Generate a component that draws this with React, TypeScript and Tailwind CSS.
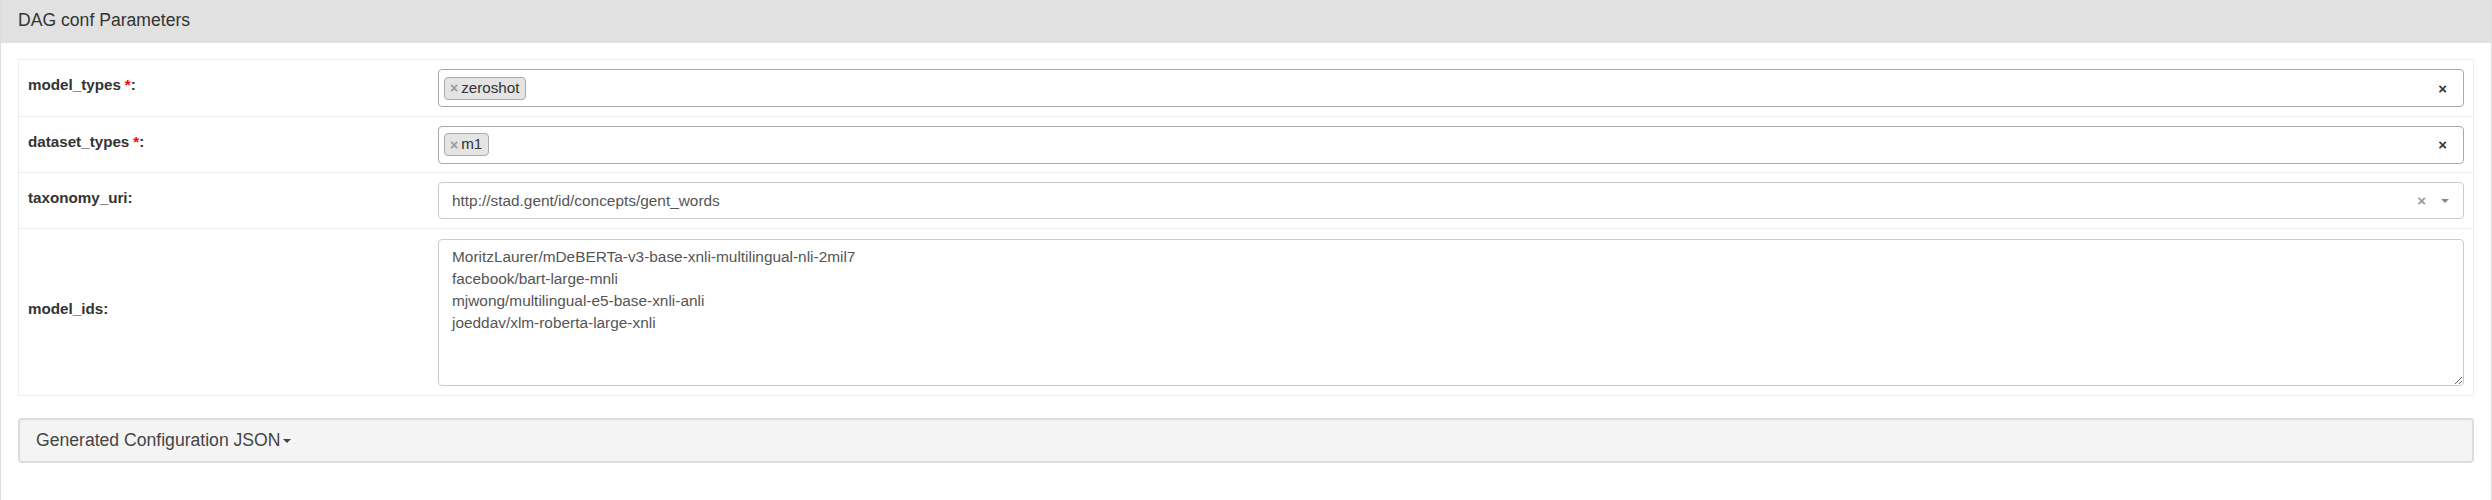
import React from "react";

const font = { fontFamily: '"Liberation Sans", Arial, Helvetica, sans-serif' };

function Tag({ text }: { text: string }) {
  return (
    <span className="flex h-[23px] items-center rounded-[4px] border border-[#aaa] bg-[#e4e4e4] pl-[5px] pr-[6px] text-[15.2px] text-[#333]">
      <span className="mr-[3px] text-[14px] font-bold leading-none text-[#999]">×</span>
      {text}
    </span>
  );
}

function MultiSelect({ tag }: { tag: string }) {
  return (
    <div className="flex h-[38px] w-full items-center rounded-[4px] border border-[#aaa] bg-white pl-[5px] pr-[16px]">
      <Tag text={tag} />
      <div className="flex-1" />
      <span className="text-[15px] font-bold leading-none text-[#333]">×</span>
    </div>
  );
}

function Row({ label, required, children, h }: { label: string; required?: boolean; children: React.ReactNode; h: string }) {
  return (
    <div className={`flex border-b border-[#eee] last:border-b-0 ${h}`}>
      <div className="flex w-[410px] shrink-0 items-center px-[9px] pb-[5px] text-[15.2px] font-bold text-[#333]">
        {label}
        {required && <span className="ml-[4px] text-[#f00]">*</span>}:
      </div>
      <div className="flex flex-1 items-center px-[9px]">{children}</div>
    </div>
  );
}

export default function App() {
  return (
    <div style={font} className="h-[500px] w-[2492px] border-x border-[#ddd] bg-white">
      <div className="flex h-[43px] items-center bg-[#e1e1e1] px-[17px] pb-[2px] text-[17.6px] text-[#333]">
        DAG conf Parameters
      </div>
      <div className="px-[17px] pt-[16px]">
        <div className="border border-[#eee]">
          <Row label="model_types" required h="h-[57px]">
            <MultiSelect tag="zeroshot" />
          </Row>
          <Row label="dataset_types" required h="h-[56px]">
            <MultiSelect tag="m1" />
          </Row>
          <Row label="taxonomy_uri" h="h-[56px]">
            <div className="flex h-[37px] w-full items-center rounded-[4px] border border-[#ccc] bg-white pl-[13px] pr-[14px] text-[15.4px] text-[#555]">
              <span className="flex-1">http://stad.gent/id/concepts/gent_words</span>
              <span className="mr-[15px] text-[15px] font-bold leading-none text-[#999]">×</span>
              <span className="h-0 w-0 border-x-[4px] border-t-[4px] border-x-transparent border-t-[#888]" />
            </div>
          </Row>
          <Row label="model_ids" h="h-[166px]">
            <textarea
              readOnly
              style={font}
              className="h-[147px] w-full resize-y rounded-[4px] border border-[#ccc] px-[13px] pt-[6px] pb-[3px] text-[15.4px] leading-[22.2px] text-[#555] outline-none"
              defaultValue={
                "MoritzLaurer/mDeBERTa-v3-base-xnli-multilingual-nli-2mil7\nfacebook/bart-large-mnli\nmjwong/multilingual-e5-base-xnli-anli\njoeddav/xlm-roberta-large-xnli"
              }
            />
          </Row>
        </div>
        <div className="mt-[22px] flex h-[45px] items-center rounded-[4px] border-2 border-[#ddd] bg-[#f4f4f4] px-[16px] text-[17.6px] text-[#444]">
          Generated Configuration JSON
          <span className="ml-[2px] mt-[1px] h-0 w-0 border-x-[4px] border-t-[4px] border-x-transparent border-t-[#444]" />
        </div>
      </div>
    </div>
  );
}
